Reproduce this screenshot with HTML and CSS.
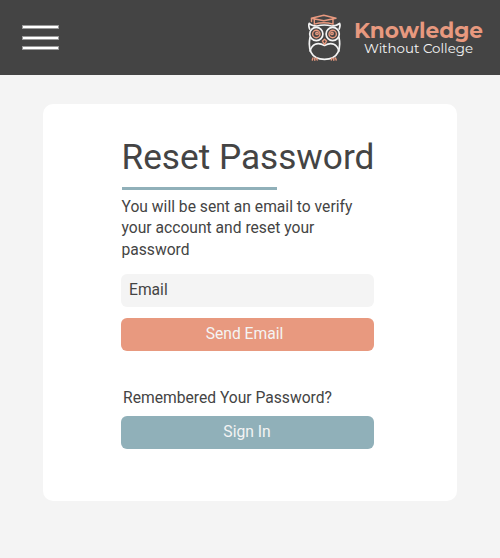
FILE: index.html
```html
<!DOCTYPE html>
<html lang="en">
<head>
<meta charset="utf-8">
<title>Reset Password</title>
<link rel="stylesheet" href="styles.css">
</head>
<body>
<header class="header">
  <button class="menu" aria-label="Menu"><span></span><span></span><span></span></button>
  <div class="brand">
    <svg class="owl" width="34" height="48" viewBox="0 0 34 48" fill="none" stroke-linecap="round" stroke-linejoin="round">
      <g stroke="#f4f4f4" stroke-width="1.7">
        <path d="M2.6 15Q1.2 11.5 2.2 9.3Q4.5 11.8 10 12Q17.3 10 24.6 12Q30 11.8 32.6 9.3Q33.6 11.5 32.2 15"/>
        <circle cx="9.3" cy="20" r="6.6"/><circle cx="25.7" cy="20" r="6.6"/>
        <path d="M3 23.5C1 34 3 45.3 17.5 45.3S34 34 32 23.5"/>
        <path d="M3 37C5 30.5 10 27.5 17.5 31.5C25 27.5 30 30.5 32 37"/>
      </g>
      <g stroke="#e8997f" stroke-width="1.4">
        <path d="M4.3 4.3 16.8 1.2 29 4.3 16.8 6.8ZM7.3 5.3V10.2Q16.8 7.4 26 10.2V5.3M4.5 4.5V7.5"/>
        <circle cx="9.3" cy="20" r="3.7"/><circle cx="25.7" cy="20" r="3.7"/>
        <circle cx="10" cy="19.4" r="1.2"/><circle cx="25" cy="19.4" r="1.2"/>
        <path d="M17.5 25.2 19.6 27.2 17.5 30.3 15.4 27.2Z"/>
        <path d="M6 43.9 5.3 46M7.8 44.2V46.3M9.5 44.2 10.2 46M25 44.2 24.3 46M26.8 44.2V46.3M28.5 43.9 29.2 46"/>
      </g>
    </svg>
    <svg class="wordmark" width="132" height="46" viewBox="0 0 132 46">
      <text class="word-main" x="1" y="23.3" textLength="129" lengthAdjust="spacingAndGlyphs">Knowledge</text>
      <text class="word-sub" x="11" y="37.5" textLength="109" lengthAdjust="spacingAndGlyphs">Without College</text>
    </svg>
  </div>
</header>
<main class="card">
  <h1 class="title">Reset Password</h1>
  <div class="rule"></div>
  <p class="intro">You will be sent an email to verify your account and reset your password</p>
  <div class="field">Email</div>
  <button class="button send">Send Email</button>
  <p class="hint">Remembered Your Password?</p>
  <button class="button sign">Sign In</button>
</main>
</body>
</html>
```
FILE: styles.css
```css
* { box-sizing: border-box; }
body {
  margin: 0;
  height: 558px;
  background: #f4f4f4;
  color: #444;
  font: 15.65px/21.5px Roboto, sans-serif;
}
.header {
  height: 75px;
  padding: 0 15px 0 22px;
  background: #444;
  display: flex;
  justify-content: space-between;
  align-items: center;
}
.menu {
  width: 37px;
  padding: 0;
  border: 0;
  background: none;
  display: flex;
  flex-direction: column;
  gap: 6.8px;
}
.menu span { height: 4px; background: #fff; border: .5px solid #999; }
.brand { display: flex; gap: 12px; align-items: center; }
.owl, .wordmark { display: block; }
.wordmark { font-family: Montserrat, Inter, sans-serif; }
.word-main { font-size: 21.2px; font-weight: 700; fill: #e8997f; }
.word-sub { font-size: 13.2px; fill: #f4f4f4; }
.card {
  width: 414px;
  height: 397.5px;
  margin: 28.5px 0 0 43px;
  padding: 32.5px 83px 0 78px;
  background: #fff;
  border-radius: 10px;
}
.title { margin: 0 0 0 .5px; font-size: 35.2px; line-height: 42px; font-weight: 400; white-space: nowrap; }
.rule { width: 155px; height: 3px; margin: 8.5px 0 0 .5px; background: #90b0b9; }
.intro { margin: 6px 0 0 .5px; }
.field {
  height: 33px;
  margin-top: 13.5px;
  padding: 0 8px;
  border-radius: 6px;
  background: #f4f4f4;
  line-height: 32px;
}
.button {
  display: block;
  width: 100%;
  height: 33px;
  padding: 0 6px 2px 0;
  border: 0;
  border-radius: 6px;
  color: #f4f4f4;
  font: inherit;
}
.send { margin-top: 11.5px; background: #e8997f; }
.sign { margin-top: 7.5px; padding: 0 1px 0 0; background: #90b0b9; }
.hint { margin: 35.5px 0 0 2px; }
```
